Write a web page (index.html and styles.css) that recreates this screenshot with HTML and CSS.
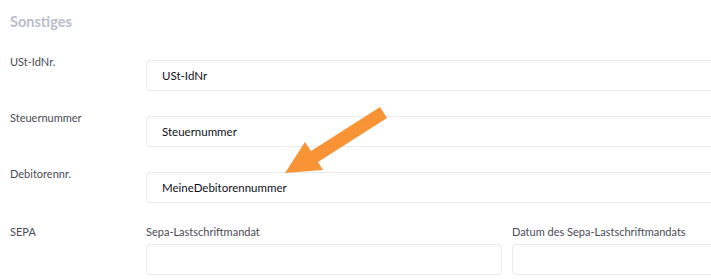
FILE: index.html
```html
<!DOCTYPE html>
<html lang="de">
<head>
<meta charset="utf-8">
<title>Sonstiges</title>
<link rel="stylesheet" href="styles.css">
</head>
<body>
<div class="page">
  <h2 class="section-title">Sonstiges</h2>
  <div class="form">
    <div class="row">
      <div class="label">USt-IdNr.</div>
      <div class="field"><div class="input">USt-IdNr</div></div>
    </div>
    <div class="row">
      <div class="label">Steuernummer</div>
      <div class="field"><div class="input">Steuernummer</div></div>
    </div>
    <div class="row">
      <div class="label">Debitorennr.</div>
      <div class="field"><div class="input">MeineDebitorennummer</div></div>
    </div>
    <div class="row row-sepa">
      <div class="label">SEPA</div>
      <div class="split">
        <div class="sub">
          <div class="sublabel">Sepa-Lastschriftmandat</div>
          <div class="input"></div>
        </div>
        <div class="sub">
          <div class="sublabel">Datum des Sepa-Lastschriftmandats</div>
          <div class="input"></div>
        </div>
      </div>
    </div>
  </div>
  <svg class="arrow" width="711" height="280" viewBox="0 0 711 280">
    <polygon points="285,173 305,142 311,151 380,107 387,118 318,162 323,170" fill="#f99436"/>
  </svg>
</div>
</body>
</html>
```

FILE: styles.css
```css
html, body {
  margin: 0;
  padding: 0;
  background: #ffffff;
  overflow: hidden;
}

.page {
  position: relative;
  width: 711px;
  height: 280px;
  padding-left: 10px;
  box-sizing: border-box;
  overflow: hidden;
  font-family: Lato, "Open Sans", sans-serif;
}

.section-title {
  margin: 0;
  padding-top: 13px;
  font-size: 14.5px;
  line-height: 17px;
  font-weight: 700;
  color: #b9bdcc;
}

.form {
  display: flex;
  flex-direction: column;
  gap: 19px;
  margin-top: 24px;
}

.row {
  display: grid;
  grid-template-columns: 136px 722px;
  align-items: start;
}

.row-sepa {
  margin-top: 2px;
}

.label {
  font-size: 11px;
  line-height: 16px;
  color: #4a4a56;
}

.field {
  padding-top: 6px;
}

.input {
  height: 31px;
  box-sizing: border-box;
  border: 1px solid #eaeaef;
  border-radius: 4px;
  background: #ffffff;
  padding: 0 15px;
  font-size: 11.5px;
  line-height: 29px;
  color: #0f0f18;
}

.split {
  display: grid;
  grid-template-columns: 356px 356px;
  gap: 10px;
}

.sub {
  display: flex;
  flex-direction: column;
  gap: 4px;
}

.sublabel {
  font-size: 11px;
  line-height: 16px;
  color: #4a4a56;
}

.arrow {
  position: absolute;
  left: 0;
  top: 0;
  pointer-events: none;
}
```
